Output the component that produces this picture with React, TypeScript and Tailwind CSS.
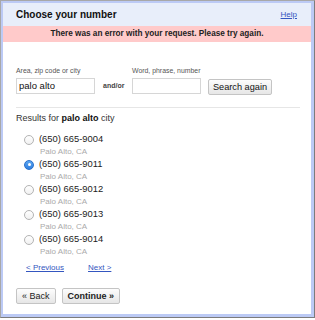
const numbers = [
  { num: "(650) 665-9004", checked: false },
  { num: "(650) 665-9011", checked: true },
  { num: "(650) 665-9012", checked: false },
  { num: "(650) 665-9013", checked: false },
  { num: "(650) 665-9014", checked: false },
];

function Radio({ checked }: { checked: boolean }) {
  if (checked) {
    return (
      <span className="flex h-[10px] w-[10px] items-center justify-center rounded-full bg-linear-to-b from-[#5aa6f2] to-[#2f7fe0] border border-[#2a6fc9]">
        <span className="h-[3px] w-[3px] rounded-full bg-white" />
      </span>
    );
  }
  return (
    <span className="h-[10px] w-[10px] rounded-full border border-[#b3b3b3] bg-linear-to-b from-white to-[#f1f1f1]" />
  );
}

function Button({ children, bold }: { children: React.ReactNode; bold?: boolean }) {
  return (
    <button
      className={
        "h-[16px] rounded-[2px] border border-[#c4c4c4] bg-linear-to-b from-[#fdfdfd] to-[#e6e6e6] px-[5px] text-[9px] leading-[14px] text-[#222] " +
        (bold ? "font-bold" : "")
      }
    >
      {children}
    </button>
  );
}

export default function App() {
  return (
    <div
      className="w-[315px] h-[318px] border border-l-[#a8a8a8] border-t-[#a8a8a8] border-r-[#7c7c7c] border-b-[#7c7c7c]"
      style={{ fontFamily: '"Liberation Sans", Arial, sans-serif' }}
    >
      <div className="flex h-full flex-col border-t-2 border-l-2 border-r-[3px] border-b-[3px] border-[#bccaf5] bg-white">
        <header className="flex h-[23px] items-center justify-between bg-[#e8eefa] pl-[13px] pr-[14px]">
          <h1 className="text-[10px] font-bold text-[#111]">Choose your number</h1>
          <a className="text-[8px] text-[#3456c0] underline">Help</a>
        </header>
        <div className="flex h-[16px] items-center justify-center bg-[#ffcaca] text-[8.2px] font-bold text-[#222]">
          There was an error with your request. Please try again.
        </div>

        <div className="flex flex-1 flex-col pl-[13px] pr-[11px] pt-[24px]">
          <div className="flex items-end">
            <div className="flex flex-col">
              <span className="text-[6.9px] leading-[9px] text-[#555]">Area, zip code or city</span>
              <input
                defaultValue="palo alto"
                className="mt-[2.5px] h-[16px] w-[79px] border border-[#d6d6d6] pl-[2px] text-[9.5px] text-[#111] outline-none"
              />
            </div>
            <span className="mx-[8px] mb-[2px] w-[21px] text-[7px] font-bold text-[#444]">and/or</span>
            <div className="flex flex-col">
              <span className="text-[6.9px] leading-[9px] text-[#555]">Word, phrase, number</span>
              <input className="mt-[2.5px] h-[16px] w-[69px] border border-[#d6d6d6] outline-none" />
            </div>
            <button className="ml-[7px] mb-[-1px] h-[16px] w-[64px] rounded-[2px] border border-[#c4c4c4] bg-linear-to-b from-[#fdfdfd] to-[#e6e6e6] text-[9.2px] leading-[14px] text-[#111]">
              Search again
            </button>
          </div>

          <div className="mt-[13px] h-px bg-[#e6e6e6]" />

          <p className="mt-[5px] text-[9px] leading-[11px] text-[#333]">
            Results for <b className="text-[#111]">palo alto</b> city
          </p>

          <ul className="mt-[10px] flex flex-col gap-[2px] pl-[8px]">
            {numbers.map((n) => (
              <li key={n.num} className="flex flex-col">
                <div className="flex h-[12px] items-center gap-[5px]">
                  <Radio checked={n.checked} />
                  <span className="text-[9.4px] text-[#222]">{n.num}</span>
                </div>
                <span className="h-[11px] pl-[16px] pt-[1px] text-[8px] leading-[10px] text-[#aaa]">
                  Palo Alto, CA
                </span>
              </li>
            ))}
          </ul>

          <div className="mt-[6px] flex gap-[24px] pl-[10px] text-[8px] leading-[10px] text-[#3456c0]">
            <a className="underline">&lt; Previous</a>
            <a className="underline">Next &gt;</a>
          </div>

          <div className="mt-[15px] flex gap-[6px]">
            <Button>« Back</Button>
            <Button bold>Continue »</Button>
          </div>
        </div>
      </div>
    </div>
  );
}
